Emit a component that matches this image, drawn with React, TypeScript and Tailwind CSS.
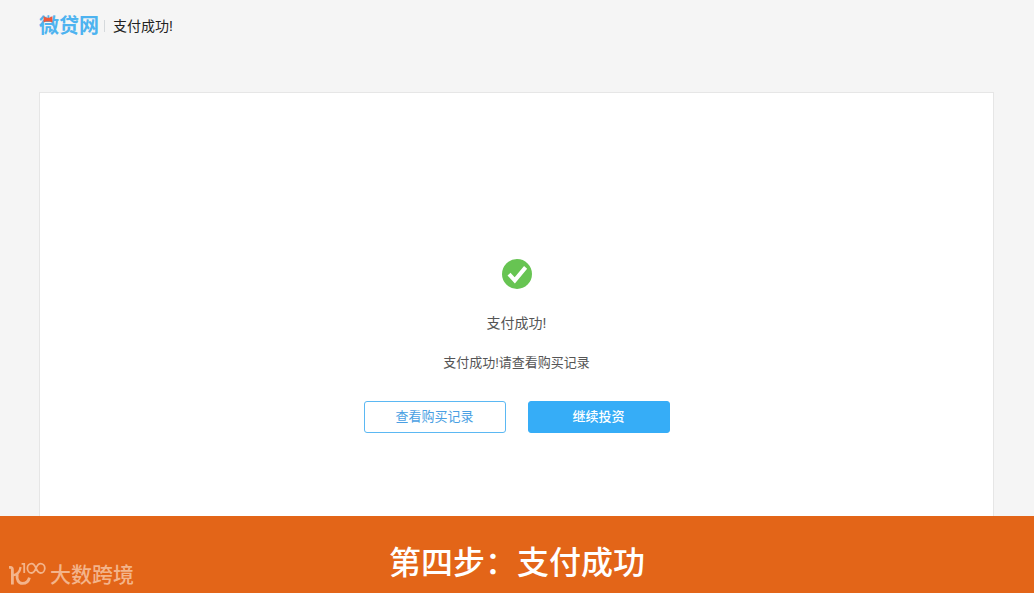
function BrandLogo() {
  return (
    <a href="#home" className="relative block text-xl leading-6 font-bold text-[#4db3f0]">
      微贷网
      <svg viewBox="0 0 10 8" className="absolute top-0.5 left-1 h-2 w-2.5" aria-hidden="true">
        <path d="M0.6 0.2 3.6 1.8H6.4L9.4 0.2V6.6L7 5.4H3L0.6 6.6Z" fill="#f0583a" />
      </svg>
    </a>
  );
}

function SuccessIcon() {
  return (
    <svg viewBox="0 0 30 30" className="size-[30px]" aria-hidden="true">
      <circle cx="15" cy="15" r="15" fill="#67c452" />
      <path d="M7 15.2 12.8 21.4 23.6 8.4" fill="none" stroke="#fff" strokeWidth="4" />
    </svg>
  );
}

function Watermark() {
  return (
    <div className="absolute bottom-[5px] left-2 flex items-center gap-1 text-[#f3b48b]">
      <svg
        viewBox="0 0 38 26"
        className="h-[26px] w-[38px]"
        fill="none"
        stroke="currentColor"
        aria-hidden="true"
      >
        <path d="M1 5.4H2.4C3.8 5.4 4.4 6 4.4 7.6V22.6" strokeWidth="2.8" />
        <path d="M4.4 13.4C9 12.8 12 10 12.6 5" strokeWidth="2.2" />
        <path d="M9.2 12C8.4 17.4 10.4 21.4 14.4 21.4C18 21.4 20.6 19.4 21.4 15.6" strokeWidth="2.8" />
        <path d="M13.6 1.8H16.2V11" strokeWidth="1.8" />
        <path
          d="M28 6.2C26.8 3.2 25.4 1.6 23.6 1.6C21.4 1.6 19.4 3.6 19.4 6.2C19.4 9 21.4 11 23.6 11C25.4 11 26.8 9.2 28 6.2C29.2 3.2 30.8 1.6 32.6 1.6C34.8 1.6 36.8 3.6 36.8 6.2C36.8 9 34.8 11 32.6 11C30.8 11 29.2 9.2 28 6.2Z"
          strokeWidth="1.8"
        />
      </svg>
      <span className="text-[21px] leading-6 font-medium">大数跨境</span>
    </div>
  );
}

export default function App() {
  return (
    <div className="flex min-h-screen flex-col bg-[#f5f5f5] font-['Liberation_Sans','Noto_Sans_CJK_SC',sans-serif]">
      <header className="mx-[39px] flex h-[52px] items-center">
        <BrandLogo />
        <span className="ml-[5px] h-3 w-px bg-[#d5d9dc]" />
        <h1 className="ml-2 text-sm leading-5 text-[#222]">支付成功!</h1>
      </header>

      <main className="mt-10 mr-10 ml-[39px] flex flex-1 flex-col items-center border border-b-0 border-[#e6e6e6] bg-white pt-[166px] pb-12">
        <SuccessIcon />
        <h2 className="mt-6 text-sm leading-5 text-[#555]">支付成功!</h2>
        <p className="mt-5 text-[13px] leading-5 text-[#555]">支付成功!请查看购买记录</p>
        <div className="mt-7 flex gap-[22px] text-[13px]">
          <button
            type="button"
            className="h-8 w-[142px] rounded-[3px] border border-[#5bb8f3] bg-white text-[#4a9fe3]"
          >
            查看购买记录
          </button>
          <button
            type="button"
            className="h-8 w-[142px] rounded-[3px] border border-[#36adf7] bg-[#36adf7] font-medium text-white"
          >
            继续投资
          </button>
        </div>
      </main>

      <footer className="relative flex h-[77px] items-center justify-center bg-[#e36518] pt-4">
        <p className="text-[32px] leading-10 font-medium text-white">第四步：支付成功</p>
        <Watermark />
      </footer>
    </div>
  );
}
